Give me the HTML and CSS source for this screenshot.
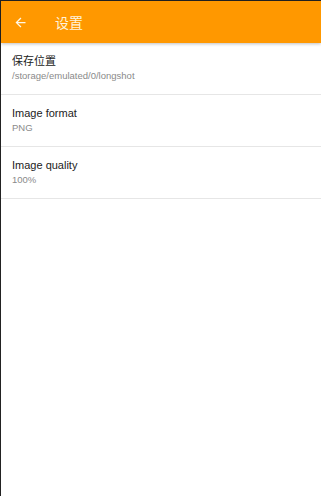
FILE: index.html
```html
<!DOCTYPE html>
<html>
<head>
<meta charset="utf-8">
<link rel="stylesheet" href="styles.css">
</head>
<body>
<div class="frame">
  <header class="appbar">
    <svg class="back" width="15" height="15" viewBox="0 0 24 24"><path d="M20 11H7.83l5.59-5.59L12 4l-8 8 8 8 1.41-1.41L7.83 13H20v-2z" fill="#fff8e8"/></svg>
    <span class="title">设置</span>
  </header>
  <div class="list">
    <div class="item">
      <div class="label">保存位置</div>
      <div class="sub">/storage/emulated/0/longshot</div>
    </div>
    <div class="item">
      <div class="label">Image format</div>
      <div class="sub">PNG</div>
    </div>
    <div class="item">
      <div class="label">Image quality</div>
      <div class="sub">100%</div>
    </div>
  </div>
</div>
</body>
</html>
```
FILE: styles.css
```css
html, body { margin: 0; padding: 0; height: 100%; }
body { background: #222; font-family: "Liberation Sans", Arial, "Noto Sans CJK SC", sans-serif; }
.frame { margin: 1px 0 0 1px; background: #fff; height: calc(100% - 1px); }
.appbar {
  height: 42px; background: #ff9800; display: flex; align-items: center;
  box-shadow: 0 1px 3px rgba(0,0,0,0.25); position: relative;
}
.back { margin-left: 12px; }
.title { margin-left: 27px; color: #fff3dc; font-size: 14px; font-family: "Noto Sans CJK SC", sans-serif; }
.item {
  height: 52px; border-bottom: 1px solid #e6e6e6; padding: 11px 0 0 11px; box-sizing: border-box;
}
.label { font-size: 11px; color: #222; line-height: 15px; font-family: "Liberation Sans", "Noto Sans CJK SC", sans-serif; }
.sub { font-size: 9.5px; color: #8a8a8a; line-height: 13px; }
```
